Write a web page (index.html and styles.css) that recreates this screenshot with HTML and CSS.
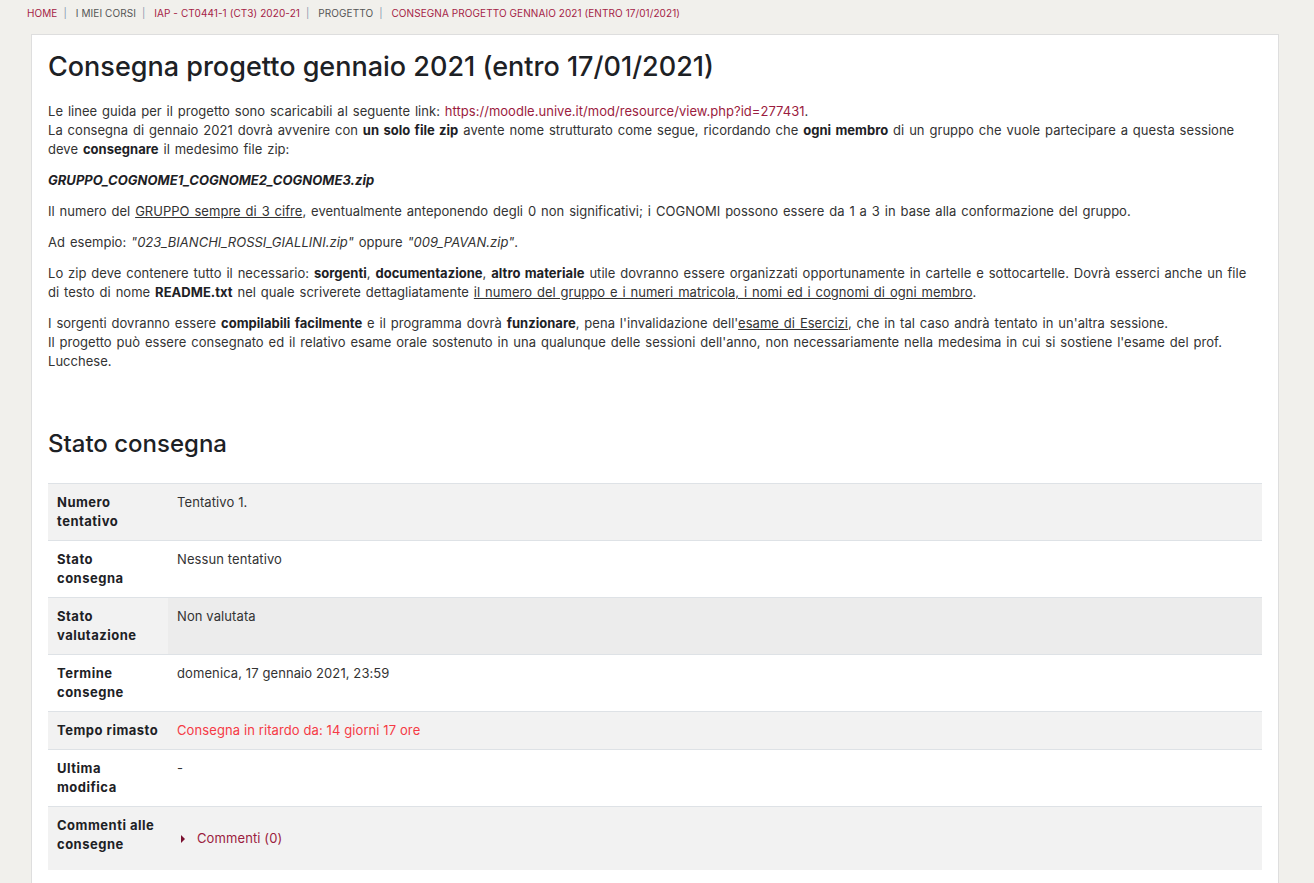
FILE: index.html
```html
<!DOCTYPE html>
<html lang="it">
<head>
<meta charset="utf-8">
<title>Consegna progetto gennaio 2021</title>
<link rel="stylesheet" href="styles.css">
</head>
<body>
<nav class="crumbs">
  <a class="c-red" href="#">HOME</a><span class="sep">|</span>
  <a class="c-dark" href="#">I MIEI CORSI</a><span class="sep">|</span>
  <a class="c-red" href="#">IAP - CT0441-1 (CT3) 2020-21</a><span class="sep">|</span>
  <a class="c-dark" href="#">PROGETTO</a><span class="sep">|</span>
  <a class="c-red" href="#">CONSEGNA PROGETTO GENNAIO 2021 (ENTRO 17/01/2021)</a>
</nav>
<main class="card">
  <h1 class="title">Consegna progetto gennaio 2021 (entro 17/01/2021)</h1>
  <div class="intro">
    <p>Le linee guida per il progetto sono scaricabili al seguente link: <a class="link" href="#">https://moodle.unive.it/mod/resource/view.php?id=277431</a>.<br>
    La consegna di gennaio 2021 dovrà avvenire con <b>un solo file zip</b> avente nome strutturato come segue, ricordando che <b>ogni membro</b> di un gruppo che vuole partecipare a questa sessione deve <b>consegnare</b> il medesimo file zip:</p>
    <p><b><i>GRUPPO_COGNOME1_COGNOME2_COGNOME3.zip</i></b></p>
    <p>Il numero del <u>GRUPPO sempre di 3 cifre</u>, eventualmente anteponendo degli 0 non significativi; i COGNOMI possono essere da 1 a 3 in base alla conformazione del gruppo.</p>
    <p>Ad esempio: <i>"023_BIANCHI_ROSSI_GIALLINI.zip"</i> oppure <i>"009_PAVAN.zip"</i>.</p>
    <p>Lo zip deve contenere tutto il necessario: <b>sorgenti</b>, <b>documentazione</b>, <b>altro materiale</b> utile dovranno essere organizzati opportunamente in cartelle e sottocartelle. Dovrà esserci anche un file di testo di nome <b>README.txt</b> nel quale scriverete dettagliatamente <u>il numero del gruppo e i numeri matricola, i nomi ed i cognomi di ogni membro</u>.</p>
    <p>I sorgenti dovranno essere <b>compilabili facilmente</b> e il programma dovrà <b>funzionare</b>, pena l'invalidazione dell'<u>esame di Esercizi</u>, che in tal caso andrà tentato in un'altra sessione.<br>
    Il progetto può essere consegnato ed il relativo esame orale sostenuto in una qualunque delle sessioni dell'anno, non necessariamente nella medesima in cui si sostiene l'esame del prof. Lucchese.</p>
  </div>

  <h2 class="subtitle">Stato consegna</h2>
  <table class="status">
    <tbody>
      <tr class="odd"><th>Numero tentativo</th><td>Tentativo 1.</td></tr>
      <tr><th>Stato consegna</th><td>Nessun tentativo</td></tr>
      <tr class="odd hover"><th>Stato valutazione</th><td>Non valutata</td></tr>
      <tr><th>Termine consegne</th><td>domenica, 17 gennaio 2021, 23:59</td></tr>
      <tr class="odd"><th>Tempo rimasto</th><td class="late">Consegna in ritardo da: 14 giorni 17 ore</td></tr>
      <tr><th>Ultima modifica</th><td>-</td></tr>
      <tr class="odd"><th>Commenti alle consegne</th><td><div class="comments"><span class="caret"></span><a class="link" href="#">Commenti (0)</a></div></td></tr>
    </tbody>
  </table>
</main>
</body>
</html>
```

FILE: styles.css
```css
html, body {
  margin: 0;
  padding: 0;
}
body {
  background: #f1f0ec;
  font-family: "Inter", "Open Sans", sans-serif;
  color: #333;
  font-size: 13px;
  line-height: 19px;
  letter-spacing: 0.1px;
  height: 883px;
  overflow: hidden;
}
a { text-decoration: none; }

.crumbs {
  padding: 6px 0 0 27px;
  height: 28px;
  box-sizing: border-box;
  font-size: 10px;
  line-height: 14px;
  letter-spacing: 0.08px;
}
.crumbs .sep {
  color: #8a9bb0;
  margin: 0 6px;
}
.c-red { color: #a52346; }
.c-dark { color: #555; }

.card {
  margin: 6px 35px 0 31px;
  background: #fff;
  border: 1px solid #dedede;
  padding: 14px 16px 30px 16px;
  min-height: 900px;
}
.title {
  margin: 0 0 17px 0;
  font-size: 27px;
  line-height: 36px;
  font-weight: 500;
  letter-spacing: 0;
  color: #1d2125;
}
.intro {
  letter-spacing: 0.03px;
  word-spacing: 1.2px;
}
.intro p {
  margin: 0 0 12px 0;
}
.intro b { color: #1d2125; font-weight: 700; }
.intro u { text-decoration-color: #333; }
.link { color: #9b1c40; }

.subtitle {
  margin: 58px 0 24px 0;
  font-size: 24px;
  line-height: 30px;
  font-weight: 500;
  letter-spacing: 0;
  color: #1d2125;
}

.status {
  width: 100%;
  border-collapse: collapse;
}
.status th, .status td {
  border-top: 1px solid #dee2e6;
  padding: 9px 9px;
  vertical-align: top;
  text-align: left;
}
.status th {
  width: 102px;
  font-weight: 700;
  letter-spacing: 0.5px;
  color: #1d2125;
}
.status tr.odd th, .status tr.odd td { background: #f2f2f2; }
.status tr.hover td { background: #ececec; }
.late { color: #f53a45; }
.comments {
  display: flex;
  align-items: center;
  margin: 13px 0 13px 0;
}
.caret {
  width: 0;
  height: 0;
  border-top: 4px solid transparent;
  border-bottom: 4px solid transparent;
  border-left: 4px solid #7a1030;
  margin: 0 12px 0 4px;
}
```
